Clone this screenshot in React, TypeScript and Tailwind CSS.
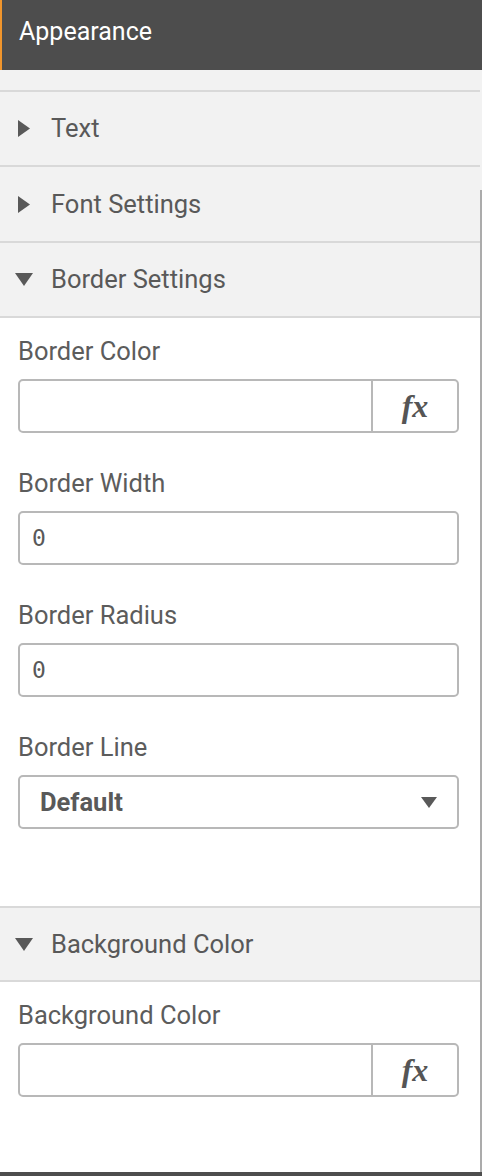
import React from "react";

const FONT = "font-['Roboto',sans-serif]";

function Caret({ open }: { open: boolean }) {
  return open ? (
    <svg width="18" height="13" viewBox="0 0 18 13" className="shrink-0">
      <path d="M0 0 L18 0 L9 13 Z" fill="#595959" />
    </svg>
  ) : (
    <svg width="12" height="17" viewBox="0 0 12 17" className="ml-[3px] mr-[3px] shrink-0">
      <path d="M0 0 L12 8.5 L0 17 Z" fill="#595959" />
    </svg>
  );
}

function SectionHeader({ label, open, h }: { label: string; open?: boolean; h: string }) {
  return (
    <div className={`flex ${h} items-center gap-[18px] border-b-2 border-[#d9d9d9] bg-[#f2f2f2] pl-[15px] text-[25.5px] text-[#595959]`}>
      <Caret open={!!open} />
      <span>{label}</span>
    </div>
  );
}

function Label({ children }: { children: React.ReactNode }) {
  return <div className="h-[30px] text-[25.5px] leading-[30px] text-[#5c5c5c]">{children}</div>;
}

function ExprInput() {
  return (
    <div className="mt-[13px] flex h-[54px] overflow-hidden rounded-[5px] border-2 border-[#b8b8b8] bg-white">
      <div className="flex-1" />
      <div className="flex w-[86px] items-center justify-center border-l-2 border-[#b8b8b8]">
        <span className="font-['Liberation_Serif',serif] text-[32px] font-bold italic leading-none text-[#555555]">fx</span>
      </div>
    </div>
  );
}

function NumInput({ value }: { value: string }) {
  return (
    <div className="mt-[13px] flex h-[54px] items-center rounded-[5px] border-2 border-[#b8b8b8] bg-white px-[12px]">
      <span className="font-['DejaVu_Sans_Mono',monospace] text-[23px] text-[#595959]">{value}</span>
    </div>
  );
}

function Select({ value }: { value: string }) {
  return (
    <div className="mt-[13px] flex h-[54px] items-center justify-between rounded-[5px] border-2 border-[#b8b8b8] bg-white pl-[20px] pr-[20px]">
      <span className="text-[25.5px] font-bold text-[#595959]">{value}</span>
      <svg width="16" height="11" viewBox="0 0 16 11">
        <path d="M0 0 L16 0 L8 11 Z" fill="#595959" />
      </svg>
    </div>
  );
}

export default function App() {
  return (
    <div className={`${FONT} flex h-[1176px] w-[482px] flex-col bg-white`}>
      <div className="flex h-[70px] shrink-0 items-center border-l-2 border-[#f0952c] bg-[#4d4d4d] pb-[7px] pl-[17px] text-[25px] text-white">
        Appearance
      </div>
      <div className="flex flex-1">
        <div className="flex w-[480px] flex-col">
          <div className="h-[22px] border-b-2 border-[#d9d9d9] bg-[#f2f2f2]" />
          <SectionHeader label="Text" h="h-[75px]" />
          <SectionHeader label="Font Settings" h="h-[76px]" />
          <SectionHeader label="Border Settings" h="h-[75px]" open />
          <div className="flex h-[590px] flex-col border-b-2 border-[#d9d9d9] pl-[18px] pr-[21px] pt-[18px]">
            <Label>Border Color</Label>
            <ExprInput />
            <div className="h-[35px]" />
            <Label>Border Width</Label>
            <NumInput value="0" />
            <div className="h-[35px]" />
            <Label>Border Radius</Label>
            <NumInput value="0" />
            <div className="h-[35px]" />
            <Label>Border Line</Label>
            <Select value="Default" />
          </div>
          <SectionHeader label="Background Color" h="h-[74px]" open />
          <div className="flex flex-1 flex-col pl-[18px] pr-[21px] pt-[18px]">
            <Label>Background Color</Label>
            <ExprInput />
          </div>
        </div>
        <div className="flex w-[2px] flex-col">
          <div className="h-[120px] bg-[#f2f2f2]" />
          <div className="flex-1 bg-[#ababab]" />
        </div>
      </div>
      <div className="h-[4px] shrink-0 bg-[#4d4d4d]" />
    </div>
  );
}
